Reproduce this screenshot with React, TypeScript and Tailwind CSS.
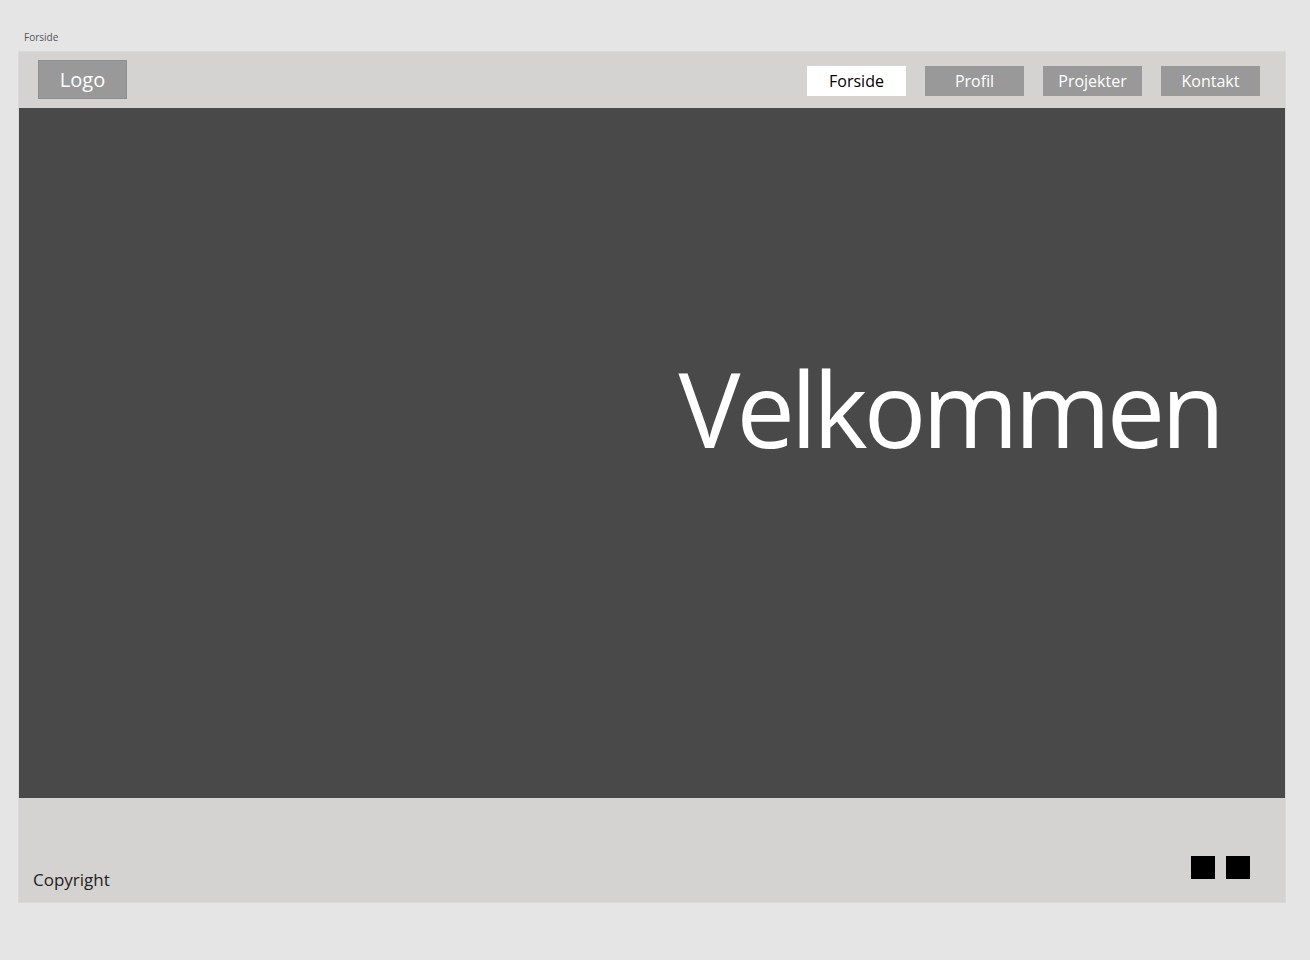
const font = { fontFamily: '"Open Sans", "Noto Sans", sans-serif' };

const navItems = ["Forside", "Profil", "Projekter", "Kontakt"];

export default function App() {
  return (
    <div className="w-[1310px] h-[960px] bg-[#e5e5e5] pt-[30px] pl-[18px]" style={font}>
      <div className="text-[10px] leading-[14px] text-[#555] pl-[6px]">Forside</div>
      <div className="mt-[7px] w-[1268px] border border-[#d9d9d9] flex flex-col">
        <header className="h-[56px] bg-[#d4d3d1] flex items-start justify-between pl-[19px] pr-[25px]">
          <div className="mt-[8px] w-[89px] h-[39px] bg-[#999999] border border-[#8f8f8f] flex items-center justify-center text-white text-[20px] leading-none">
            Logo
          </div>
          <nav className="mt-[14px] flex gap-[19px]">
            {navItems.map((item, i) => (
              <div
                key={item}
                className={`w-[99px] h-[30px] flex items-center justify-center text-[16px] leading-none ${
                  i === 0 ? "bg-white text-black" : "bg-[#999999] text-white"
                }`}
              >
                {item}
              </div>
            ))}
          </nav>
        </header>
        <main className="h-[690px] bg-[#494949] flex items-start justify-end pr-[64px] pt-[225px]">
          <h1 className="text-white text-[104px] leading-[150px] font-normal tracking-[-4px]">Velkommen</h1>
        </main>
        <footer className="h-[104px] bg-[#d4d3d1] flex items-end justify-between pl-[14px] pr-[35px] pb-[10px]">
          <span className="text-[17px] leading-[24px] text-[#222]">Copyright</span>
          <div className="flex gap-[11px] mb-[13px]">
            <div className="w-[24px] h-[23px] bg-black" />
            <div className="w-[24px] h-[23px] bg-black" />
          </div>
        </footer>
      </div>
    </div>
  );
}
